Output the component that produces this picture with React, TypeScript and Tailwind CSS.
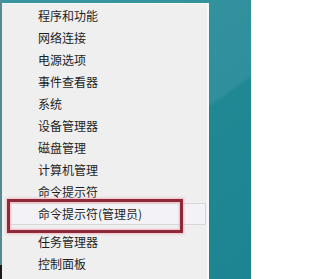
import React from "react";

const items = [
  "程序和功能",
  "网络连接",
  "电源选项",
  "事件查看器",
  "系统",
  "设备管理器",
  "磁盘管理",
  "计算机管理",
  "命令提示符",
];

const Row = ({ label }: { label: string }) => (
  <div className="h-[22px] flex items-center pl-[36px] text-[12px] text-[#1e1e1e] leading-none">
    {label}
  </div>
);

export default function App() {
  return (
    <div
      className="w-[251px] h-[279px] overflow-hidden flex bg-[linear-gradient(145deg,#3a95a2_0%,#2f8f9c_55%,#1f8893_56%,#1c8591_100%)]"
      style={{ fontFamily: '"Noto Sans CJK SC", "Noto Sans", sans-serif' }}
    >
      <div className="w-[2px] h-full flex flex-col bg-[#568a90]">
        <div className="flex-1" />
        <div className="h-[14px] bg-[#1a1a1a]" />
      </div>
      <div className="pt-[3px] flex">
        <div className="relative w-[205px] h-full bg-[#efefef] border-t border-[#f7f7f7] pt-[1px] flex flex-col">
          {items.map((label) => (
            <Row key={label} label={label} />
          ))}
          <div className="ml-[7px] mr-[1px] h-[22px] flex items-center pl-[28px] text-[12px] text-[#1e1e1e] leading-none bg-[#f3f3f7] border border-[#d6d6dc]">
            命令提示符(管理员)
          </div>
          <div className="h-[6px]" />
          <Row label="任务管理器" />
          <Row label="控制面板" />
          {/* red annotation frame */}
          <div className="absolute left-[5px] top-[195px] w-[176px] h-[34px] border-[3px] border-[#8c2a3a] shadow-[0_0_2px_1px_#f2b8c0,inset_0_0_2px_1px_#f2b8c0]" />
        </div>
        <div className="w-[2px] h-full bg-[#f6fafa]" />
      </div>
    </div>
  );
}
